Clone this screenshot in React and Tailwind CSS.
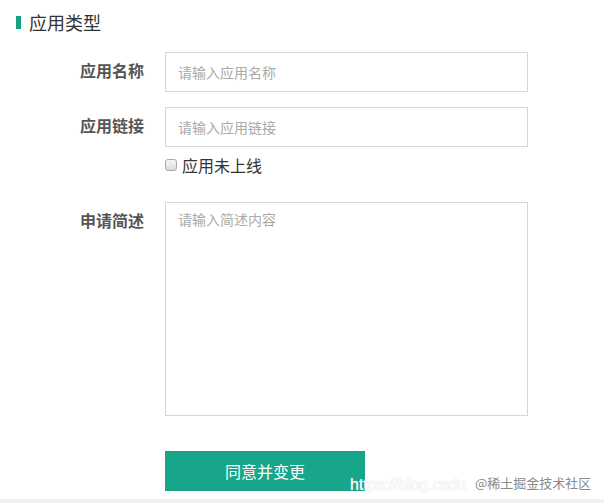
const FONT = "font-['Noto_Sans_CJK_SC','Noto_Sans',sans-serif]";

function Row({ label, children, className = "" }) {
  return (
    <div className={`flex items-start gap-[21px] ${className}`}>
      <div className="w-[144px] shrink-0 text-right text-[16px] font-bold leading-[36px] text-[#555]">
        {label}
      </div>
      {children}
    </div>
  );
}

export default function App() {
  return (
    <div className={`relative flex h-[503px] w-full flex-col bg-white ${FONT}`}>
      <div className="flex items-center gap-2 pl-4 pt-[10px]">
        <span className="h-[13px] w-[5px] bg-[#16a085]" />
        <span className="text-[18px] leading-[24px] text-[#333]">应用类型</span>
      </div>

      <div className="mt-[18px] flex flex-col">
        <Row label="应用名称">
          <input
            className="h-[40px] w-[363px] border border-[#d6d6d6] px-3 text-[14px] text-[#333] outline-none placeholder:text-[#aaa]"
            placeholder="请输入应用名称"
          />
        </Row>
        <Row label="应用链接" className="mt-[15px]">
          <input
            className="h-[40px] w-[363px] border border-[#d6d6d6] px-3 text-[14px] text-[#333] outline-none placeholder:text-[#aaa]"
            placeholder="请输入应用链接"
          />
        </Row>
        <label className="ml-[165px] mt-[9px] flex h-[18px] items-center gap-[5px] text-[16px] text-[#333]">
          <input
            type="checkbox"
            className="m-0 h-[12px] w-[12px] appearance-none rounded-[3px] border border-[#a9a9a9] bg-gradient-to-b from-[#f6f6f6] to-[#dcdcdc]"
          />
          应用未上线
        </label>
        <Row label="申请简述" className="mt-[28px]">
          <textarea
            className="h-[214px] w-[363px] resize-none border border-[#d6d6d6] px-3 py-[6px] text-[14px] leading-[20px] text-[#333] outline-none placeholder:text-[#aaa]"
            placeholder="请输入简述内容"
          />
        </Row>
        <button className="ml-[165px] mt-[35px] h-[40px] w-[200px] bg-[#17a68a] text-[16px] text-white">
          同意并变更
        </button>
      </div>

      <div className="mt-[8px] flex-1 bg-[#f0f0f0]" />

      <div className="pointer-events-none absolute left-[350px] top-[475px] whitespace-nowrap font-['Liberation_Sans',sans-serif] text-[16px] leading-[20px] text-white [text-shadow:0_0_1px_#c8c8c8]">
        https://blog.csdn
      </div>
      <div className="pointer-events-none absolute left-[475px] top-[473px] whitespace-nowrap text-[13px] text-[#8a8a8a] [text-shadow:0_0_2px_#fff]">
        @稀土掘金技术社区
      </div>
    </div>
  );
}
